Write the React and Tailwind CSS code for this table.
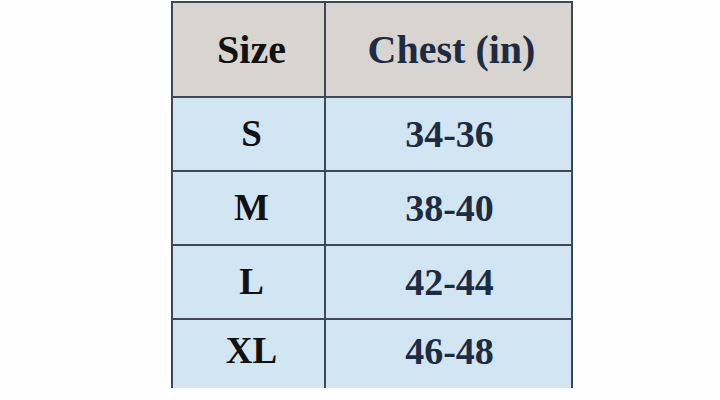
export default function App() {
  const rows = [
    ["S", "34-36"],
    ["M", "38-40"],
    ["L", "42-44"],
    ["XL", "46-48"],
  ];
  return (
    <div className="w-[720px] h-[400px] bg-[#fefefe] overflow-hidden" style={{ fontFamily: '"Liberation Serif", serif' }}>
      <div className="ml-[171px] mt-[1px] w-[402px] border-x-2 border-t-2 border-[#3d4959]">
        <div className="grid grid-cols-[153px_1fr] h-[95px] border-b-2 border-[#3d4959] bg-[#d8d5d0]">
          <div className="flex items-center justify-center border-r-2 border-[#3d4959] pl-[6px] text-[40px] font-bold text-[#111111]">Size</div>
          <div className="flex items-center justify-center pl-[6px] text-[40px] font-bold text-[#1d2c42]">Chest (in)</div>
        </div>
        {rows.map(([s, c], i) => (
          <div
            key={s}
            className={
              i < rows.length - 1
                ? "grid grid-cols-[153px_1fr] h-[74px] border-b-2 border-[#3d4959] bg-[#d2e5f3]"
                : "grid grid-cols-[153px_1fr] h-[68px] bg-[#d2e5f3]"
            }
          >
            <div className={i < rows.length - 1 ? "flex items-center justify-center border-r-2 border-[#3d4959] pl-[6px] text-[37px] font-bold text-[#111111]" : "flex items-center justify-center border-r-2 border-[#3d4959] pl-[6px] pb-[6px] text-[37px] font-bold text-[#111111]"}>{s}</div>
            <div className={i < rows.length - 1 ? "flex items-center justify-center pl-[2px] text-[38px] font-bold text-[#1d2c42]" : "flex items-center justify-center pl-[2px] pb-[6px] text-[38px] font-bold text-[#1d2c42]"}>{c}</div>
          </div>
        ))}
      </div>
    </div>
  );
}
